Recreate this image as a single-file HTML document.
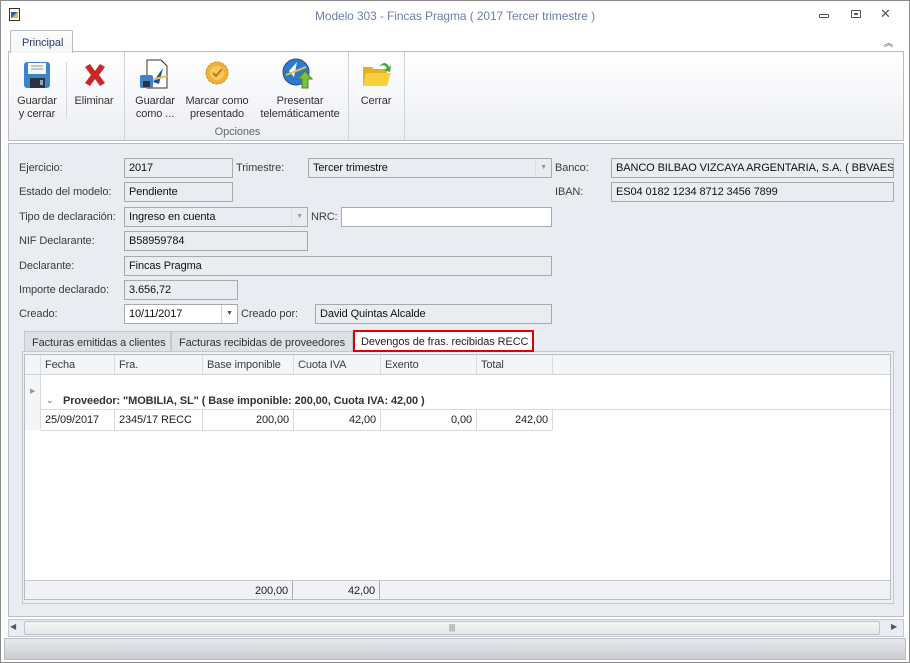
<!DOCTYPE html>
<html><head><meta charset="utf-8"><style>
*{box-sizing:border-box;margin:0;padding:0}
body{width:910px;height:663px;overflow:hidden;background:#fff;font-family:"Liberation Sans",sans-serif;font-size:11px;letter-spacing:-0.1px;color:#1e1e1e;position:relative;white-space:nowrap}
.a{position:absolute}
.lbl{position:absolute;color:#3c3c3c}
.in{position:absolute;height:20px;border:1px solid #a9a9a9;background:#e9ecf0;padding:3px 4px;white-space:nowrap;overflow:hidden;color:#111}
.dd{position:absolute;right:0;top:0;bottom:0;width:16px;border-left:1px solid #d0d0d0;color:#999;font-size:7px;text-align:center;line-height:18px}
.hc{position:absolute;top:0;height:20px;border-right:1px solid #d8dbe0;padding:4px 4px;color:#3c3c3c;overflow:hidden}
.dc{position:absolute;top:0;height:20px;border-right:1px solid #d8dbe0;padding:4px 4px;overflow:hidden}
.r{text-align:right}
.bt{position:absolute;text-align:center;color:#333;line-height:13px}
</style></head><body>
<div class="a" style="left:0;top:0;width:910px;height:663px;border:1px solid #8a8a8a;background:#fff"></div>
<div class="a" style="left:9px;top:8px;width:11px;height:13px;border:1px solid #333;background:#fff"><div class="a" style="left:1px;top:3px;width:7px;height:6px;background:linear-gradient(135deg,#2a5db0 40%,#e6c33a 60%)"></div></div>
<div class="a" style="left:0;top:9px;width:910px;text-align:center;color:#6b7fa8;font-size:12px">Modelo 303 - Fincas Pragma ( 2017 Tercer trimestre )</div>
<div class="a" style="left:819px;top:14px;width:10px;height:4px;border:1px solid #555;border-radius:1px"></div>
<div class="a" style="left:851px;top:10px;width:10px;height:8px;border:1px solid #555"><div class="a" style="left:2px;top:2px;width:4px;height:2px;border:1px solid #555"></div></div>
<div class="a" style="left:880px;top:6px;color:#555;font-size:13px">✕</div>
<div class="a" style="left:884px;top:36px;color:#444;font-size:9px">︽</div>
<div class="a" style="left:10px;top:30px;width:63px;height:23px;border:1px solid #b8bcc4;border-bottom:none;background:linear-gradient(#fdfdfd,#f4f5f7);border-radius:2px 2px 0 0;z-index:2;padding:6px 0 0 11px;color:#2d3a6a">Principal</div>
<div class="a" style="left:8px;top:51px;width:896px;height:90px;border:1px solid #b8bcc4;background:linear-gradient(#ffffff,#eceef2)"></div>
<div class="a" style="left:124px;top:52px;width:1px;height:88px;background:#d0d3d8"></div>
<div class="a" style="left:348px;top:52px;width:1px;height:88px;background:#d0d3d8"></div>
<div class="a" style="left:404px;top:52px;width:1px;height:88px;background:#d0d3d8"></div>
<div class="a" style="left:66px;top:62px;width:1px;height:56px;background:#d6d8dc"></div>
<svg class="a" style="left:23px;top:61px" width="28" height="28"><rect x="1" y="1" width="26" height="26" rx="3" fill="#3d84c8"/><rect x="5" y="2" width="18" height="11" fill="#f4f6f8"/><line x1="8" y1="5" x2="20" y2="5" stroke="#999"/><line x1="8" y1="8" x2="20" y2="8" stroke="#999"/><rect x="7" y="17" width="15" height="10" fill="#2d3440"/><rect x="17" y="19" width="3" height="5" fill="#8ab"/></svg>
<svg class="a" style="left:82px;top:62px" width="26" height="26"><path d="M3 5 L8 2 L13 9 L18 2 L23 5 L17 13 L23 21 L18 24 L13 17 L8 24 L3 21 L9 13Z" fill="#c8282a"/></svg>
<svg class="a" style="left:139px;top:58px" width="34" height="32"><path d="M8 2 H22 L28 8 V30 H8Z" fill="#fff" stroke="#333"/><path d="M14 24 L24 10 L20 26Z" fill="#1f4fa0"/><path d="M12 22 L28 18" stroke="#e8c43a" stroke-width="2"/><rect x="1" y="17" width="13" height="13" rx="2" fill="#3d84c8"/><rect x="4" y="23" width="7" height="6" fill="#2d3440"/></svg>
<svg class="a" style="left:204px;top:60px" width="26" height="30"><circle cx="13" cy="13" r="11" fill="#eeb236" stroke="#d8901a" stroke-dasharray="3 1"/><circle cx="13" cy="13" r="7" fill="#f6c860"/><path d="M9 13 L12 16 L18 9" stroke="#c47a10" stroke-width="2" fill="none"/></svg>
<svg class="a" style="left:281px;top:57px" width="34" height="34"><circle cx="15" cy="15" r="13" fill="#2f79c8"/><circle cx="15" cy="15" r="13" fill="none" stroke="#1c4f9a"/><path d="M8 14 L16 5 L13 20Z" fill="#fff"/><path d="M5 18 L25 10" stroke="#e8c43a" stroke-width="2"/><path d="M17 22 L24 14 L31 22 H27 V31 H21 V22Z" fill="#7bbf3e" stroke="#4a8a20"/></svg>
<svg class="a" style="left:361px;top:57px" width="32" height="32"><path d="M2 10 H11 L13 12 H26 V28 H2Z" fill="#e8b020"/><path d="M5 16 H30 L26 29 H2Z" fill="#f7d040"/><path d="M18 10 Q24 2 28 10 L30 8 L29 15 L23 13 L26 11 Q23 6 18 10" fill="#3aa83a"/></svg>
<div class="bt" style="left:7px;top:95px;width:60px">Guardar<br>y cerrar</div>
<div class="bt" style="left:64px;top:95px;width:60px">Eliminar</div>
<div class="bt" style="left:125px;top:95px;width:60px">Guardar<br>como ...</div>
<div class="bt" style="left:177px;top:95px;width:80px">Marcar como<br>presentado</div>
<div class="bt" style="left:250px;top:95px;width:100px">Presentar<br>telemáticamente</div>
<div class="bt" style="left:351px;top:95px;width:50px">Cerrar</div>
<div class="bt" style="left:200px;top:126px;width:75px;color:#666">Opciones</div>
<div class="a" style="left:8px;top:143px;width:896px;height:474px;border:1px solid #b8bcc4;background:#e9ecf0"></div>
<div class="lbl" style="left:19px;top:162px">Ejercicio:</div>
<div class="in" style="left:124px;top:158px;width:109px">2017</div>
<div class="lbl" style="left:236px;top:162px">Trimestre:</div>
<div class="in" style="left:308px;top:158px;width:244px">Tercer trimestre<div class="dd" style="border-left-color:#e0e0e0">▼</div></div>
<div class="lbl" style="left:555px;top:162px">Banco:</div>
<div class="in" style="left:611px;top:158px;width:283px">BANCO BILBAO VIZCAYA ARGENTARIA, S.A. ( BBVAESMM</div>
<div class="lbl" style="left:19px;top:186px">Estado del modelo:</div>
<div class="in" style="left:124px;top:182px;width:109px">Pendiente</div>
<div class="lbl" style="left:555px;top:186px">IBAN:</div>
<div class="in" style="left:611px;top:182px;width:283px">ES04 0182 1234 8712 3456 7899</div>
<div class="lbl" style="left:19px;top:211px">Tipo de declaración:</div>
<div class="in" style="left:124px;top:207px;width:184px">Ingreso en cuenta<div class="dd" style="border-left-color:#e0e0e0">▼</div></div>
<div class="lbl" style="left:311px;top:211px">NRC:</div>
<div class="in" style="left:341px;top:207px;width:211px;background:#fff"></div>
<div class="lbl" style="left:19px;top:235px">NIF Declarante:</div>
<div class="in" style="left:124px;top:231px;width:184px">B58959784</div>
<div class="lbl" style="left:19px;top:260px">Declarante:</div>
<div class="in" style="left:124px;top:256px;width:428px">Fincas Pragma</div>
<div class="lbl" style="left:19px;top:284px">Importe declarado:</div>
<div class="in" style="left:124px;top:280px;width:114px">3.656,72</div>
<div class="lbl" style="left:19px;top:308px">Creado:</div>
<div class="in" style="left:124px;top:304px;width:114px;background:#fff">10/11/2017<div class="dd" style="color:#555">▼</div></div>
<div class="lbl" style="left:241px;top:308px">Creado por:</div>
<div class="in" style="left:315px;top:304px;width:237px">David Quintas Alcalde</div>
<div class="a" style="left:24px;top:331px;width:147px;height:21px;border:1px solid #c4c8ce;border-bottom:none;background:#dde1e6;padding:5px 0 0 7px;color:#333">Facturas emitidas a clientes</div>
<div class="a" style="left:171px;top:331px;width:182px;height:21px;border:1px solid #c4c8ce;border-bottom:none;background:#dde1e6;padding:5px 0 0 7px;color:#333">Facturas recibidas de proveedores</div>
<div class="a" style="left:353px;top:330px;width:181px;height:22px;border:2px solid #e00000;background:#fff;padding:4px 0 0 6px;color:#222;z-index:3">Devengos de fras. recibidas RECC</div>
<div class="a" style="left:22px;top:351px;width:872px;height:253px;border:1px solid #c4c8ce;background:#eef0f3"></div>
<div class="a" style="left:24px;top:354px;width:867px;height:246px;border:1px solid #b8bcc4;background:#fff"></div>
<div class="a" style="left:25px;top:355px;width:865px;height:20px;background:#f4f5f7;border-bottom:1px solid #d0d3d8">
<div class="hc" style="left:0;width:16px"></div>
<div class="hc" style="left:16px;width:74px">Fecha</div>
<div class="hc" style="left:90px;width:88px">Fra.</div>
<div class="hc" style="left:178px;width:91px">Base imponible</div>
<div class="hc" style="left:269px;width:87px">Cuota IVA</div>
<div class="hc" style="left:356px;width:96px">Exento</div>
<div class="hc" style="left:452px;width:76px">Total</div>
</div>
<div class="a" style="left:25px;top:375px;width:16px;height:35px;background:#f4f5f7;border-right:1px solid #d8dbe0"></div>
<div class="a" style="left:30px;top:387px;color:#999;font-size:7px">▶</div>
<div class="a" style="left:25px;top:410px;width:16px;height:20px;background:#f4f5f7;border-right:1px solid #d8dbe0"></div>
<div class="a" style="left:46px;top:395px;color:#666;font-size:9px">⌄</div>
<div class="a" style="left:63px;top:395px;font-weight:bold;color:#333">Proveedor: "MOBILIA, SL" ( Base imponible: 200,00, Cuota IVA: 42,00 )</div>
<div class="a" style="left:41px;top:409px;width:849px;height:1px;background:#d8dbe0"></div>
<div class="a" style="left:25px;top:410px;width:865px;height:21px">
<div class="dc" style="left:16px;width:74px">25/09/2017</div>
<div class="dc" style="left:90px;width:88px">2345/17 RECC</div>
<div class="dc r" style="left:178px;width:91px">200,00</div>
<div class="dc r" style="left:269px;width:87px">42,00</div>
<div class="dc r" style="left:356px;width:96px">0,00</div>
<div class="dc r" style="left:452px;width:76px">242,00</div>
</div>
<div class="a" style="left:41px;top:430px;width:511px;height:1px;background:#d8dbe0"></div>
<div class="a" style="left:25px;top:580px;width:865px;height:19px;background:#f1f2f5;border-top:1px solid #c4c8ce">
<div class="a r" style="left:178px;top:0;width:90px;height:18px;padding:4px 4px;border-right:1px solid #aaa">200,00</div>
<div class="a r" style="left:269px;top:0;width:86px;height:18px;padding:4px 4px;border-right:1px solid #aaa">42,00</div>
</div>
<div class="a" style="left:8px;top:619px;width:896px;height:18px;background:#e9ecf0;border:1px solid #c4c8ce"></div>
<div class="a" style="left:10px;top:622px;color:#555;font-size:8px">◀</div>
<div class="a" style="left:891px;top:622px;color:#555;font-size:8px">▶</div>
<div class="a" style="left:24px;top:621px;width:856px;height:14px;border:1px solid #c0c4ca;background:linear-gradient(#f4f5f7,#e4e6ea);border-radius:2px;text-align:center;font-size:8px;color:#666;line-height:12px">|||</div>
<div class="a" style="left:4px;top:638px;width:902px;height:22px;border:1px solid #b8bcc4;background:linear-gradient(#e8eaee,#c8ccd2)"></div>
</body></html>
